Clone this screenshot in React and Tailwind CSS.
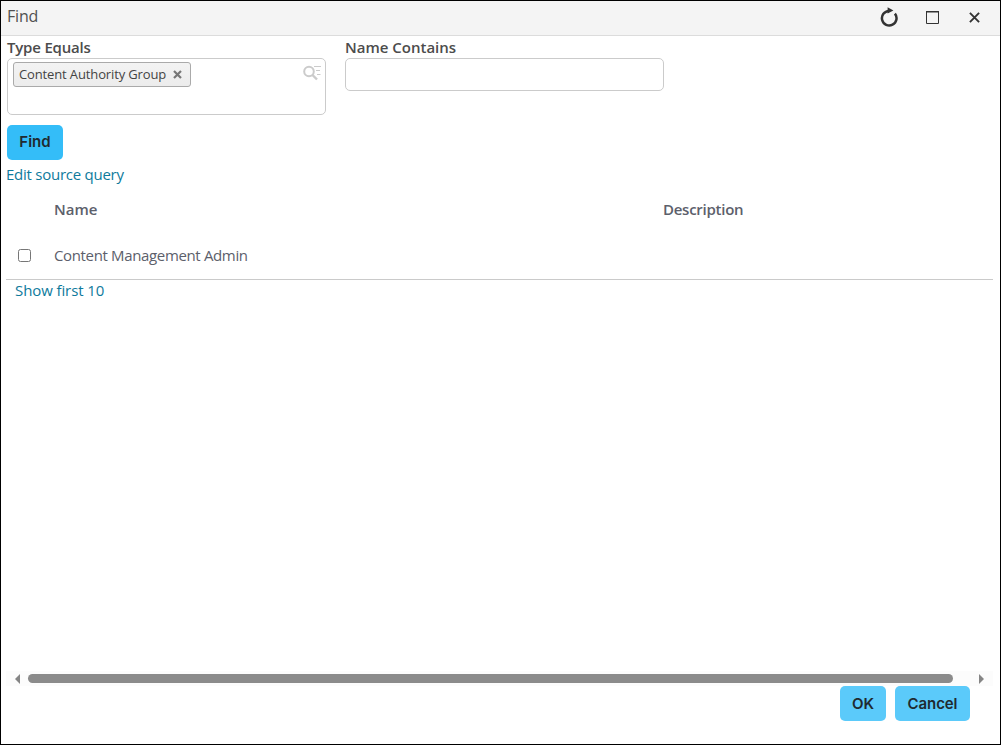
import { useState } from 'react';

const rows = [{ id: 1, name: 'Content Management Admin', description: '' }];

function TitleBar({ title }) {
  return (
    <header className="flex h-[35px] shrink-0 items-center justify-between border-b border-[#dcdcdc] bg-[#f4f4f4] pl-1.5 pr-5">
      <h1 className="pb-[5px] text-[16px] leading-6 tracking-[-0.2px] text-[#505050]">{title}</h1>
      <div className="flex items-center pb-[3px] text-[#333333]">
        <button type="button" aria-label="Refresh" className="mr-[27px]">
          <svg className="block h-5 w-5" viewBox="0 0 20 20" fill="none">
            <path d="M10 3.9A7.3 7.3 0 1 0 15.9 6.6" stroke="currentColor" strokeWidth="2.5" />
            <path d="M8.6.2l5.8 3.4-5.8 3z" fill="currentColor" />
          </svg>
        </button>
        <button type="button" aria-label="Maximize" className="mr-[30px] pt-0.5">
          <svg className="block h-[13px] w-[13px]" viewBox="0 0 13 13" fill="none">
            <path d="M.5 1v11.5h12V1" stroke="currentColor" />
            <path d="M0 .75h13" stroke="currentColor" strokeWidth="1.5" />
          </svg>
        </button>
        <button type="button" aria-label="Close" className="pt-0.5">
          <svg className="block h-[11px] w-[11px]" viewBox="0 0 11 11" fill="none">
            <path d="M.9.9l9.2 9.2M10.1.9L.9 10.1" stroke="currentColor" strokeWidth="1.9" />
          </svg>
        </button>
      </div>
    </header>
  );
}

function TypePicker() {
  return (
    <div className="flex h-[57px] w-[319px] items-start justify-between rounded-[5px] border border-[#cbcbcb] bg-white pl-[5px] pr-1 pt-[3px]">
      <span className="flex h-[25px] w-[178px] items-center justify-between rounded-[3px] border border-[#aaaaaa] bg-linear-to-b from-[#f3f3f3] to-[#ececec] pl-[5px] pr-2 text-[13px] text-[#444444]">
        <span className="whitespace-nowrap tracking-[-0.13px]">Content Authority Group</span>
        <button type="button" aria-label="Remove">
          <svg className="block h-[9px] w-[9px]" viewBox="0 0 9 9" fill="none">
            <path d="M1 1l7 7M8 1L1 8" stroke="#777777" strokeWidth="2.2" />
          </svg>
        </button>
      </span>
      <svg className="mt-[3px] h-[16px] w-[18px]" viewBox="0 0 18 16" fill="none" stroke="#cbcbcb">
        <circle cx="6" cy="6.5" r="4.8" strokeWidth="2" />
        <path d="M9.5 10l4.5 4.5" strokeWidth="2.4" />
        <path d="M11 1.5h7M13 5.5h4M14 9.5h3.5" strokeWidth="1.2" />
      </svg>
    </div>
  );
}

function ScrollBar() {
  return (
    <div className="flex h-[15px] items-center bg-[#fcfcfc] pl-[9px] pr-[9px]">
      <svg className="h-[10px] w-[5px]" viewBox="0 0 5 10">
        <path d="M5 0v10L0 5z" fill="#858585" />
      </svg>
      <div className="ml-2 h-[9px] w-[925px] rounded-full bg-[#8b8b8b]" />
      <svg className="ml-auto h-[10px] w-[5px]" viewBox="0 0 5 10">
        <path d="M0 0v10l5-5z" fill="#858585" />
      </svg>
    </div>
  );
}

export default function App() {
  const [name, setName] = useState('');
  const [selected, setSelected] = useState([]);

  const toggle = (id) =>
    setSelected((current) => (current.includes(id) ? current.filter((item) => item !== id) : [...current, id]));

  return (
    <div className="flex h-[745px] w-[1001px] flex-col border border-black bg-white font-['Open_Sans','Noto_Sans',sans-serif]">
      <TitleBar title="Find" />

      <main className="flex flex-1 flex-col pl-[5px] pr-[7px]">
        <form className="pl-px" onSubmit={(event) => event.preventDefault()}>
          <div className="flex gap-[19px] text-[15px] font-semibold text-[#4c4c4c]">
            <div>
              <div className="h-[22px] leading-[22px] tracking-[-0.2px]">Type Equals</div>
              <div className="font-normal">
                <TypePicker />
              </div>
            </div>
            <label>
              <span className="block h-[22px] leading-[22px]">Name Contains</span>
              <input
                type="text"
                value={name}
                onChange={(event) => setName(event.target.value)}
                className="block h-[33px] w-[319px] rounded-[5px] border border-[#cbcbcb] px-2 font-normal"
              />
            </label>
          </div>
          <button
            type="submit"
            className="mt-2.5 block h-[35px] w-14 rounded-[5px] bg-[#34bdf8] font-['Inter',sans-serif] text-[15px] font-semibold text-[#202a30]"
          >
            Find
          </button>
        </form>

        <a href="#query" className="mt-[3px] self-start text-[15px] leading-[22px] tracking-[-0.25px] text-[#0e7a9c]">
          Edit source query
        </a>

        <table className="mt-[1px] w-full table-fixed text-left text-[15px] text-[#5c606b]">
          <colgroup>
            <col className="w-12" />
            <col className="w-[609px]" />
            <col />
          </colgroup>
          <thead>
            <tr className="h-[47px]">
              <th />
              <th className="font-semibold">Name</th>
              <th className="font-semibold tracking-[-0.26px]">Description</th>
            </tr>
          </thead>
          <tbody>
            {rows.map((row) => (
              <tr key={row.id} className="h-[46px] border-b border-[#cacaca]">
                <td className="pl-3">
                  <input
                    type="checkbox"
                    aria-label={row.name}
                    checked={selected.includes(row.id)}
                    onChange={() => toggle(row.id)}
                    className="block h-[13px] w-[13px]"
                  />
                </td>
                <td className="pb-px tracking-[-0.35px]">{row.name}</td>
                <td>{row.description}</td>
              </tr>
            ))}
          </tbody>
        </table>

        <a href="#more" className="-mt-px ml-[9px] self-start text-[15px] leading-[22px] tracking-[-0.1px] text-[#0e7a9c]">
          Show first 10
        </a>

        <div className="mt-auto">
          <ScrollBar />
        </div>
      </main>

      <footer className="flex h-[58px] shrink-0 justify-end gap-[9px] pr-[30px] font-['Inter',sans-serif] text-[15px] font-semibold tracking-[-0.1px] text-[#202a30]">
        <button type="button" className="h-[35px] w-[46px] rounded-[5px] bg-[#5bcafa] pt-px">
          OK
        </button>
        <button type="button" className="h-[35px] w-[75px] rounded-[5px] bg-[#5bcafa] pt-px">
          Cancel
        </button>
      </footer>
    </div>
  );
}
